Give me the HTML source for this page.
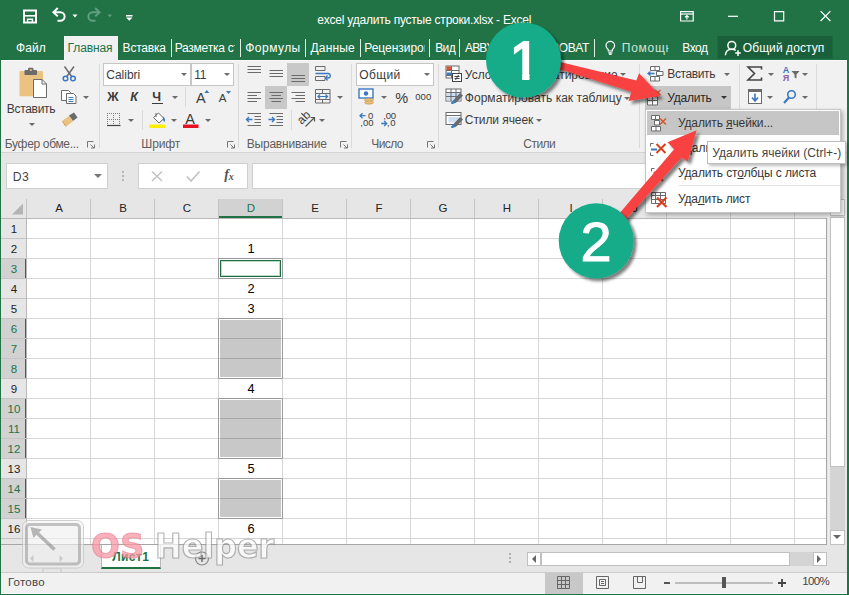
<!DOCTYPE html>
<html lang="ru">
<head>
<meta charset="utf-8">
<title>excel удалить пустые строки.xlsx - Excel</title>
<style>
html,body{margin:0;padding:0;}
body{width:849px;height:595px;overflow:hidden;position:relative;background:#217346;
  font-family:"Liberation Sans","DejaVu Sans",sans-serif;font-size:12px;color:#444;}
#win{position:absolute;left:0;top:0;width:849px;height:595px;overflow:hidden;}
.a{position:absolute;}
.t{position:absolute;white-space:nowrap;line-height:1;}
.txt{position:absolute;left:0;top:0;}
svg{position:absolute;left:0;top:0;overflow:visible;}
.dd{position:absolute;width:0;height:0;border-left:3px solid transparent;border-right:3px solid transparent;border-top:3px solid #6a6a6a;}
.gsep{position:absolute;top:64px;width:1px;height:84px;background:#dadada;}
.ssep{position:absolute;width:1px;height:20px;background:#dadada;}
.lnch{position:absolute;top:141px;width:7px;height:7px;}
.box{position:absolute;background:#fff;border:1px solid #c6c6c6;box-sizing:border-box;}
.sel{position:absolute;background:#c8c8c8;}
.rhs{position:absolute;left:1px;width:24px;background:#d2d2d2;border-right:2px solid #217346;}
.fill{position:absolute;left:220px;width:61px;background:#c8c8c8;}
u{text-decoration:underline;text-underline-offset:1px;}
</style>
</head>
<body>
<div id="win">
<!-- ===== TITLE BAR ===== -->
<svg width="849" height="60" viewBox="0 0 849 60">
  <!-- save -->
  <g fill="none" stroke="#fff">
    <path d="M24 10.500h12v12h-12z" stroke-width="2"/>
    <path d="M24 15.800h12" stroke-width="1.600"/>
    <path d="M27.600 22.500v-3.300h4.800v3.300" stroke-width="1.500"/>
  </g>
  <!-- undo -->
  <g fill="none" stroke="#fff" stroke-width="2">
    <path d="M54 12.200h6.300a4.300 4.300 0 0 1 0 8.600h-2.800"/>
    <path d="M57.800 8l-4.400 4.200 4.400 4.200" stroke-linejoin="miter"/>
  </g>
  <path d="M72.500 14.500h5l-2.500 3z" fill="#fff"/>
  <!-- redo (disabled) -->
  <g fill="none" stroke="#5f9f7e" stroke-width="2">
    <path d="M99 12.200h-6.300a4.300 4.300 0 0 0 0 8.600h2.800"/>
    <path d="M95.200 8l4.400 4.200-4.400 4.200"/>
  </g>
  <path d="M107.500 14.500h4.600l-2.300 2.800z" fill="#5f9f7e"/>
  <!-- customize QAT -->
  <path d="M126 15h6.5v1.4H126z M126 17.6h6.5l-3.25 3.2z" fill="#fff"/>
  <!-- ribbon display options -->
  <g fill="none" stroke="#fff" stroke-width="1.2">
    <path d="M680.6 11.6h12.6v9.4h-12.6z"/>
    <path d="M680.6 14h12.6"/>
    <path d="M686.9 19.6v-4 M684.9 17.4l2-1.9 2 1.9"/>
  </g>
  <!-- min / max / close -->
  <path d="M728 16.3h10" stroke="#fff" stroke-width="1.2"/>
  <path d="M774.5 11.6h9.2v9.2h-9.2z" fill="none" stroke="#fff" stroke-width="1.2"/>
  <path d="M820.6 11.2l9.8 9.8 M830.4 11.2l-9.8 9.8" stroke="#fff" stroke-width="1.2"/>
  <!-- active tab -->
  <rect x="64" y="36" width="54" height="25" fill="#f1f1f1"/><rect x="64" y="36" width="1" height="24" fill="#fafafa"/>
  <!-- share button -->
  <rect x="717.5" y="36" width="115" height="22.5" fill="#19603a"/>
  <g fill="none" stroke="#fff" stroke-width="1.5">
    <circle cx="731.8" cy="45.4" r="3.9"/>
    <path d="M725.4 55.2c.2-4 2.6-6 6.4-6 1.6 0 2.9.4 3.9 1.100"/>
    <path d="M735.2 53.1h5.6 M738 50.3v5.600"/>
  </g>
  <!-- lightbulb -->
  <g fill="none" stroke="#fff" stroke-width="1.200">
    <path d="M608.300 51v-1.300c-1.500-1.100-2.300-2.300-2.300-4.100a4.300 4.300 0 0 1 8.600 0c0 1.800-.8 3-2.300 4.100v1.300z"/>
    <path d="M608.300 52.800h4 M609 54.400h2.600"/>
  </g>
  <!-- tab separators -->
  <g stroke="#dfeee6" stroke-width="1">
    <path d="M171.5 39v18 M240.500 39v18 M305.500 39v18 M360.500 39v18 M429.500 39v18 M459.500 39v18 M594.500 39v18"/>
  </g>
</svg>
<!-- ===== RIBBON BG ===== -->
<div class="a" style="left:1px;top:60px;width:846px;height:93px;background:#f1f1f1;border-top:1px solid #fafafa;box-sizing:border-box;"></div>
<div class="a" style="left:65px;top:60px;width:53px;height:1px;background:#f1f1f1;"></div>
<div class="a" style="left:1px;top:153px;width:846px;height:46px;background:#e6e6e6;"></div>
<div class="a" style="left:1px;top:152px;width:846px;height:1px;background:#d2d4d4;"></div>
<!-- group separators -->
<div class="gsep" style="left:99px;"></div>
<div class="gsep" style="left:238px;"></div>
<div class="gsep" style="left:351px;"></div>
<div class="gsep" style="left:438px;"></div>
<div class="gsep" style="left:639px;"></div>
<div class="gsep" style="left:739px;"></div>
<div class="gsep" style="left:816px;"></div>
<!-- small separators -->
<div class="ssep" style="left:185px;top:87px;"></div>
<div class="ssep" style="left:142px;top:110px;"></div>
<div class="ssep" style="left:291px;top:110px;"></div>
<!-- input boxes -->
<div class="box" style="left:103px;top:63px;width:88px;height:23px;"></div>
<div class="box" style="left:191px;top:63px;width:43px;height:23px;"></div>
<div class="box" style="left:356px;top:63px;width:78px;height:23px;"></div>
<!-- pressed buttons -->
<div class="sel" style="left:287px;top:63px;width:22px;height:23px;"></div>
<div class="sel" style="left:265px;top:86px;width:22px;height:23px;"></div>
<div class="sel" style="left:645px;top:86px;width:86px;height:23px;background:#c6c6c6;"></div>
<!-- dropdown arrows -->
<div class="dd" style="left:29px;top:123px;"></div>
<div class="dd" style="left:83px;top:96px;"></div>
<div class="dd" style="left:181px;top:73px;"></div>
<div class="dd" style="left:224px;top:73px;"></div>
<div class="dd" style="left:172px;top:96px;"></div>
<div class="dd" style="left:128px;top:119px;"></div>
<div class="dd" style="left:171px;top:119px;"></div>
<div class="dd" style="left:205px;top:119px;"></div>
<div class="dd" style="left:337px;top:96px;"></div>
<div class="dd" style="left:319px;top:119px;"></div>
<div class="dd" style="left:381px;top:96px;"></div>
<div class="dd" style="left:424px;top:73px;"></div>
<div class="dd" style="left:620px;top:73px;"></div>
<div class="dd" style="left:624px;top:97px;"></div>
<div class="dd" style="left:536px;top:119px;"></div>
<div class="dd" style="left:724px;top:73px;"></div>
<div class="dd" style="left:721px;top:96px;border-top-color:#333;"></div>
<div class="dd" style="left:768px;top:73px;"></div>
<div class="dd" style="left:802px;top:73px;"></div>
<div class="dd" style="left:767px;top:96px;"></div>
<div class="dd" style="left:802px;top:96px;"></div>
<!-- ===== RIBBON ICONS ===== -->
<svg width="849" height="160" viewBox="0 0 849 160">
  <!-- dialog launchers -->
  <g fill="none" stroke="#777" stroke-width="1">
    <path d="M87.500 147.500v-6h6 M90.500 144.500l3.500 3.500 M94.500 144.500v3.500h-3.500"/>
    <path d="M227.500 147.500v-6h6 M230.500 144.500l3.500 3.500 M234.500 144.500v3.500h-3.500"/>
    <path d="M340.500 147.500v-6h6 M343.500 144.500l3.500 3.500 M347.500 144.500v3.500h-3.500"/>
    <path d="M427.500 147.500v-6h6 M430.500 144.500l3.500 3.500 M434.500 144.500v3.500h-3.500"/>
  </g>
  <!-- Paste -->
  <g>
    <rect x="19.500" y="71" width="23.500" height="25.300" rx="1" fill="#eac282"/>
    <rect x="24.500" y="70" width="12.500" height="5" rx=".8" fill="#6b6b6b"/>
    <rect x="28" y="67.700" width="5.500" height="3.500" rx="1.200" fill="#6b6b6b"/>
    <rect x="29.800" y="69.300" width="2" height="1.600" fill="#eac282"/>
    <path d="M33.500 79.500h8.500l4.500 4.500v13.500h-13z" fill="#fff" stroke="#6b6b6b" stroke-width="1"/>
    <path d="M42 79.500v4.500h4.500" fill="none" stroke="#6b6b6b" stroke-width="1"/>
  </g>
  <!-- Cut -->
  <g fill="none" stroke-width="1.500">
    <path d="M64.500 66.500l7.500 10.500 M74 66.500l-7.500 10.500" stroke="#6b6b6b"/>
    <circle cx="65.500" cy="78.500" r="2.300" stroke="#3a78c2"/>
    <circle cx="73" cy="78.500" r="2.300" stroke="#3a78c2"/>
  </g>
  <!-- Copy -->
  <g fill="#fff" stroke="#6b6b6b" stroke-width="1">
    <path d="M61.500 90.500h7l2 2v8h-9z"/>
    <path d="M66.500 93.500h7l2.500 2.500v7.500h-9.500z"/>
    <path d="M68.500 97.500h5 M68.500 99.500h5 M68.500 101.500h5" stroke="#3a78c2"/>
  </g>
  <!-- Format painter -->
  <g>
    <path d="M62 121l7-5 4 5.500-7 5z" fill="#eac282"/>
    <path d="M69 115.500l5-3 3.500 5-4.500 3.500z" fill="#6b6b6b"/>
    <path d="M62.500 121.500l3.500 5" stroke="#c79a4e" stroke-width="1"/>
  </g>
  <!-- grow / shrink font -->
  <path d="M204.300 93l2.500-3 2.500 3z" fill="#3a78c2"/>
  <path d="M226 91l2.500 3 2.500-3z" fill="#3a78c2"/>
  <!-- borders -->
  <g fill="none" stroke="#7a7a7a" stroke-width="1" stroke-dasharray="1 1">
    <path d="M107 113.500h13 M107 119.500h13 M107.500 113v12 M113.500 113v12 M119.500 113v12"/>
  </g>
  <path d="M107 125.500h13.500" stroke="#444" stroke-width="1.200"/>
  <!-- fill colour -->
  <g>
    <path d="M153.500 117.500l5-4.500 5.500 5.500-5 4.500z" fill="#fff" stroke="#6b6b6b" stroke-width="1"/>
    <path d="M156 113v4" stroke="#6b6b6b" stroke-width="1"/>
    <path d="M163 116.500c2 1.500 2.500 3.500 1.500 5.500-1.500-1-2-3-1.500-5.500z" fill="#3a78c2"/>
    <rect x="149.500" y="124.500" width="15.500" height="3.500" fill="#ffef00"/>
  </g>
  <!-- font colour -->
  <rect x="183" y="124.500" width="15.500" height="3.500" fill="#e81123"/>
  <!-- align top / middle / bottom -->
  <g stroke="#6b6b6b" stroke-width="1">
    <path d="M247.500 66.500h13.500 M247.500 69.500h13.500 M247.500 72.500h13.500"/>
    <path d="M269.500 70.500h13.500 M269.500 73.500h13.500 M269.500 76.500h13.500"/>
    <path d="M291.500 75.500h13.500 M291.500 78.500h13.500 M291.500 81.500h13.500"/>
    <!-- left / center / right -->
    <path d="M247.500 92.500h13.500 M247.500 95.500h9.500 M247.500 98.500h13.500 M247.500 101.500h9.500"/>
    <path d="M269.500 92.500h13.500 M271.500 95.500h9.500 M269.500 98.500h13.500 M271.500 101.500h9.500"/>
    <path d="M291.500 92.500h13.500 M295.500 95.500h9.500 M291.500 98.500h13.500 M295.500 101.500h9.500"/>
    <!-- indent -->
    <path d="M247.500 113.500h13.500 M254.500 116.500h6.500 M254.500 119.500h6.500 M254.500 122.500h6.500 M247.500 125.500h13.500"/>
    <path d="M269.500 113.500h13.500 M276.500 116.500h6.500 M276.500 119.500h6.500 M276.500 122.500h6.500 M269.500 125.500h13.500"/>
  </g>
  <g fill="none" stroke="#3a78c2" stroke-width="1.400">
    <path d="M252.500 119.500h-6 M249 117l-2.500 2.500 2.500 2.500"/>
    <path d="M268.500 119.500h6 M272 117l2.500 2.500-2.500 2.500"/>
  </g>
  <!-- wrap text -->
  <g fill="none" stroke-width="1">
    <path d="M315.500 66.500h9.500v4h-9.500z M315.500 76.500h9.500v4h-9.500z" stroke="#6b6b6b"/>
    <path d="M315.500 73.500h12.500a2 2 0 0 1 0 4.500h-2" stroke="#3a78c2" stroke-width="1.300"/>
    <path d="M327.500 75.500l-2 2.500 2 2.500" stroke="#3a78c2" stroke-width="1.300"/>
  </g>
  <!-- merge -->
  <g fill="none" stroke="#6b6b6b" stroke-width="1">
    <path d="M315.500 89.500h14.500v13.500h-14.500z M315.500 93.500h14.500 M315.500 99.500h14.500 M322.500 89.500v4 M322.500 99.500v3.500"/>
    <path d="M318 96.500h9.500 M320 94.500l-2 2 2 2 M325.500 94.500l2 2-2 2" stroke="#3a78c2" stroke-width="1.200"/>
  </g>
  <!-- orientation arrow -->
  <path d="M305.500 126.500l8.500-8.500 M310.500 117.500h4v4" fill="none" stroke="#555" stroke-width="1.200"/>
  <!-- currency -->
  <g>
    <rect x="359" y="89" width="14" height="9" fill="#fff" stroke="#3a78c2" stroke-width="1.400"/>
    <circle cx="366" cy="93.500" r="2.200" fill="#3a78c2"/>
    <ellipse cx="369" cy="100" rx="4.500" ry="1.600" fill="#eac282" stroke="#c79a4e" stroke-width=".8"/>
    <ellipse cx="369" cy="102.500" rx="4.500" ry="1.600" fill="#eac282" stroke="#c79a4e" stroke-width=".8"/>
  </g>
  <!-- inc/dec decimal arrows -->
  <g fill="none" stroke="#3a78c2" stroke-width="1.300">
    <path d="M365.500 115.700h-5.500 M362.500 113.200l-2.500 2.500 2.500 2.500"/>
    <path d="M381.200 123.500h5.500 M384.200 121l2.500 2.500-2.500 2.500"/>
  </g>
  <!-- conditional formatting -->
  <g>
    <rect x="446" y="66" width="13" height="12" fill="#fff" stroke="#6b6b6b" stroke-width="1"/>
    <rect x="446.500" y="66.500" width="5" height="4" fill="#d65532"/>
    <rect x="446.500" y="72.500" width="5" height="3" fill="#3a78c2"/>
    <path d="M451.500 66v12 M446 70.500h13 M446 75.500h7" stroke="#6b6b6b" stroke-width="1" fill="none"/>
    <rect x="452.500" y="73.500" width="9" height="8" fill="#fff" stroke="#444" stroke-width="1"/>
    <path d="M454.500 76.500h5 M454.500 78.500h5 M458.500 75l-3 5" stroke="#444" stroke-width="1" fill="none"/>
  </g>
  <!-- format as table -->
  <g>
    <rect x="446" y="89" width="15" height="12" fill="#fff" stroke="#6b6b6b" stroke-width="1"/>
    <rect x="446.500" y="92.500" width="14" height="8" fill="#cfdff3"/>
    <path d="M446 92.500h15 M446 96.500h15 M451 89v12 M456 89v12" stroke="#6b6b6b" stroke-width="1" fill="none"/>
    <path d="M460 93l3 2.500-6 6.500-3.500.5.500-3z" fill="#6b6b6b"/>
    <path d="M454 100l2.500 2.500-4 1.500c-1 0-1.500-.5-1.500-1.500z" fill="#3a78c2"/>
  </g>
  <!-- cell styles -->
  <g>
    <rect x="446" y="112.500" width="15" height="12" fill="#fff" stroke="#6b6b6b" stroke-width="1"/>
    <rect x="448.500" y="117" width="10" height="5.500" fill="#cfdff3"/>
    <path d="M446 115.500h15" stroke="#6b6b6b" stroke-width="1"/>
    <path d="M460 117l3 2.500-6 6.500-3.500.5.500-3z" fill="#6b6b6b"/>
    <path d="M454 124l2.500 2.500-4 1.500c-1 0-1.500-.5-1.500-1.500z" fill="#3a78c2"/>
  </g>
  <!-- insert cells -->
  <g fill="#fff" stroke="#6b6b6b" stroke-width="1" transform="translate(0 -1)">
    <path d="M650.500 67.500h9v4h-9z M650.500 77.500h9v4.500h-9z M655 67.500v4 M655 77.500v4.500"/>
    <path d="M656.500 72.500h6.500v4h-6.500z"/>
    <path d="M654.500 74.500h-6 M650.500 72.500l-2.500 2 2.500 2" stroke="#3a78c2" stroke-width="1.300" fill="none"/>
  </g>
  <!-- delete cells -->
  <g fill="#fff" stroke="#6b6b6b" stroke-width="1" transform="translate(0 -2)">
    <path d="M647.500 98.500h10v8.500h-10z M652.500 98.500v8.500 M647.500 102.500h10"/>
    <path d="M655 92l5.500 5 M660.500 92l-5.500 5" stroke="#d65532" stroke-width="1.400" fill="none"/>
  </g>
  <!-- autosum -->
  <path d="M761.500 69.500v-2.500h-13.500l6.500 6.500-6.500 6.500h13.500v-2.500" fill="none" stroke="#444" stroke-width="1.600"/>
  <!-- fill down -->
  <g>
    <rect x="748.500" y="89.500" width="13" height="14" fill="#fff" stroke="#6b6b6b" stroke-width="1"/>
    <path d="M748.500 91h13" stroke="#6b6b6b" stroke-width="2"/>
    <path d="M755 93.500v7 M752 97.500l3 3.500 3-3.500" stroke="#3a78c2" stroke-width="1.600" fill="none"/>
  </g>
  <!-- sort & filter funnel -->
  <path d="M791.500 71h8l-3 3.500v4l-2-1v-3z" fill="#6b6b6b"/>
  <!-- find -->
  <g fill="none" stroke="#3a78c2">
    <circle cx="791.500" cy="94.500" r="3.800" stroke-width="1.600"/>
    <path d="M789 97.500l-5 5.500" stroke-width="2.200"/>
  </g>
</svg>
<!-- ===== FORMULA BAR ===== -->
<div class="box" style="left:6px;top:163px;width:102px;height:26px;border-color:#d0d0d0;"></div>
<div class="box" style="left:138px;top:163px;width:110px;height:26px;border-color:#d0d0d0;"></div>
<div class="box" style="left:252px;top:163px;width:580px;height:26px;border-color:#d0d0d0;"></div>
<div class="dd" style="left:94px;top:174px;border-left-width:4px;border-right-width:4px;border-top-width:4px;border-top-color:#777;"></div>
<svg width="849" height="200" viewBox="0 0 849 200">
  <g fill="#b8b8b8"><rect x="122" y="171" width="2" height="2"/><rect x="122" y="175" width="2" height="2"/><rect x="122" y="179" width="2" height="2"/></g>
  <path d="M152 171.500l10 9.500 M162 171.500l-10 9.500" stroke="#c4c4c4" stroke-width="1.600" fill="none"/>
  <path d="M187 176.500l4 4.500 8.500-9.500" stroke="#c4c4c4" stroke-width="1.800" fill="none"/>
</svg>
<!-- ===== GRID ===== -->
<div class="a" style="left:1px;top:199px;width:846px;height:373px;background:#e6e6e6;"></div>
<div class="a" style="left:26px;top:218px;width:801px;height:326px;background:#fff;"></div>
<!-- selected headers -->
<div class="a" style="left:218px;top:199px;width:65px;height:17px;background:#d2d2d2;border-bottom:2px solid #217346;"></div>
<div class="rhs" style="top:259px;height:19px;"></div>
<div class="rhs" style="top:319px;height:59px;"></div>
<div class="rhs" style="top:399px;height:59px;"></div>
<div class="rhs" style="top:479px;height:39px;"></div>
<svg width="849" height="595" viewBox="0 0 849 595">
  <!-- corner triangle -->
  <path d="M23 203.500v11h-11z" fill="#b4b4b4"/>
  <!-- header separators -->
  <g stroke="#c4c4c4" stroke-width="1">
    <path d="M26.500 199v19 M90.500 199v19 M154.500 199v19 M218.500 199v19 M282.500 199v19 M346.500 199v19 M410.500 199v19 M474.500 199v19 M538.500 199v19 M602.500 199v19 M666.500 199v19 M730.500 199v19 M794.500 199v19"/>
    <path d="M1 238.500h25 M1 258.500h25 M1 278.500h25 M1 298.500h25 M1 318.500h25 M1 338.500h25 M1 358.500h25 M1 378.500h25 M1 398.500h25 M1 418.500h25 M1 438.500h25 M1 458.500h25 M1 478.500h25 M1 498.500h25 M1 518.500h25 M1 538.500h25"/>
  </g>
  <!-- gridlines -->
  <g stroke="#d6d6d6" stroke-width="1">
    <path d="M90.500 218v326 M154.500 218v326 M218.500 218v326 M282.500 218v326 M346.500 218v326 M410.500 218v326 M474.500 218v326 M538.500 218v326 M602.500 218v326 M666.500 218v326 M730.500 218v326 M794.500 218v326"/>
    <path d="M26 238.500h801 M26 258.500h801 M26 278.500h801 M26 298.500h801 M26 318.500h801 M26 338.500h801 M26 358.500h801 M26 378.500h801 M26 398.500h801 M26 418.500h801 M26 438.500h801 M26 458.500h801 M26 478.500h801 M26 498.500h801 M26 518.500h801 M26 538.500h801"/>
  </g>
  <!-- grid frame -->
  <path d="M26.500 218v326 M1 218.500h826" stroke="#b8b8b8" stroke-width="1" fill="none"/>
  <path d="M826.500 218v326.500 M1 544.500h826" stroke="#a6a6a6" stroke-width="1" fill="none"/>
</svg>
<!-- selected cells -->
<div class="fill" style="top:320px;height:57px;"></div>
<div class="fill" style="top:400px;height:57px;"></div>
<div class="fill" style="top:480px;height:37px;"></div>
<svg width="849" height="595" viewBox="0 0 849 595">
  <path d="M220 338.500h61 M220 358.500h61 M220 418.500h61 M220 438.500h61 M220 498.500h61" stroke="#aaa6a8" stroke-width="1"/>
  <path d="M218.500 258.500h64v20h-64z M218.500 318.500h64v60h-64z M218.500 398.500h64v60h-64z M218.500 478.500h64v40h-64z" fill="none" stroke="#9a9a9a" stroke-width="1"/>
</svg>
<div class="a" style="left:220px;top:260px;width:59px;height:15px;border:1px solid #1e6e42;background:#fff;box-shadow:inset 0 0 0 1px rgba(33,115,70,.28);"></div>
<!-- ===== SCROLLBARS ===== -->
<div class="a" style="left:828px;top:199px;width:3px;height:346px;background:#ececec;"></div>
<div class="a" style="left:830px;top:199px;width:15px;height:346px;background:#d4d4d4;"></div>
<div class="a" style="left:830px;top:199px;width:13px;height:15px;background:#fff;border:1px solid #c0c0c0;"></div>
<div class="a" style="left:830px;top:217px;width:13px;height:248px;background:#fff;border:1px solid #c0c0c0;"></div>
<div class="a" style="left:830px;top:530px;width:13px;height:13px;background:#fff;border:1px solid #c0c0c0;"></div>
<div class="dd" style="left:833px;top:535px;border-left-width:4px;border-right-width:4px;border-top-width:4px;border-top-color:#666;"></div>
<div class="a" style="left:527px;top:552px;width:300px;height:14px;background:#d4d4d4;"></div>
<div class="a" style="left:527px;top:552px;width:12px;height:12px;background:#fff;border:1px solid #c0c0c0;"></div>
<div class="a" style="left:541px;top:552px;width:247px;height:12px;background:#fff;border:1px solid #c0c0c0;"></div>
<div class="a" style="left:813px;top:552px;width:12px;height:12px;background:#fff;border:1px solid #c0c0c0;"></div>
<svg width="849" height="595" viewBox="0 0 849 595">
  <path d="M536 555l-4 4 4 4z M817 555l4 4-4 4z" fill="#666"/>
  <g fill="#b0b0b0"><rect x="509" y="553" width="2" height="2"/><rect x="509" y="557" width="2" height="2"/><rect x="509" y="561" width="2" height="2"/></g>
</svg>
<!-- ===== SHEET TAB ===== -->
<div class="a" style="left:101px;top:545px;width:60px;height:22px;background:#fff;border-bottom:2px solid #217346;border-left:1px solid #b8b8b8;border-right:1px solid #b8b8b8;box-sizing:border-box;height:24px;"></div>
<svg width="849" height="595" viewBox="0 0 849 595">
  <circle cx="202" cy="558.500" r="6.500" fill="none" stroke="#8a8a8a" stroke-width="1.200"/>
  <path d="M198.500 558.500h7 M202 555v7" stroke="#666" stroke-width="1.400"/>
  <!-- sheet nav arrows (dim) -->
  <path d="M33 555l-3.500 3.500 3.500 3.500z M60 555l3.500 3.500-3.500 3.500z" fill="#c4c4c4"/>
</svg>
<!-- ===== STATUS BAR ===== -->
<div class="a" style="left:1px;top:572px;width:846px;height:1px;background:#cbcbcb;"></div>
<div class="a" style="left:1px;top:573px;width:845px;height:20px;background:#f1f1f1;border-left:1px solid #fbfbfb;border-bottom:1px solid #fbfbfb;"></div>
<div class="a" style="left:545px;top:573px;width:38px;height:21px;background:#c8c8c8;"></div>
<svg width="849" height="595" viewBox="0 0 849 595">
  <!-- normal view -->
  <g fill="none" stroke="#666" stroke-width="1">
    <path d="M557.500 576.500h12v12h-12z M561.500 576.500v12 M565.500 576.500v12 M557.500 580.500h12 M557.500 584.500h12"/>
    <!-- page layout -->
    <path d="M596.500 576.500h12v12h-12z M599.500 579.500h6v6h-6z M601 581.500h3 M601 583.500h3"/>
    <!-- page break -->
    <path d="M633.500 576.500h12v12h-12z M637.500 576.500v6h5v-6"/>
  </g>
  <!-- zoom slider -->
  <path d="M675 583h98" stroke="#8a8a8a" stroke-width="1"/>
  <rect x="722" y="577" width="4" height="11" fill="#555"/>
  <path d="M664 583h6" stroke="#444" stroke-width="1.800"/>
  <path d="M778 583h8 M782 579v8" stroke="#444" stroke-width="1.800"/>
</svg>

<div class="txt">
<span class="t" style="left:317.30px;top:14.04px;font-size:12px;color:#fff;letter-spacing:-0.220px;">excel удалить пустые строки.xlsx - Excel</span>
<span class="t" style="left:16.00px;top:41.94px;font-size:12px;color:#fff;letter-spacing:0.046px;">Файл</span>
<span class="t" style="left:67.60px;top:41.94px;font-size:12px;color:#217346;letter-spacing:-0.127px;">Главная</span>
<span class="t" style="left:122.60px;top:41.94px;font-size:12px;color:#fff;letter-spacing:-0.216px;">Вставка</span>
<span class="t" style="left:174.70px;top:41.94px;font-size:12px;color:#fff;letter-spacing:-0.244px;clip-path:inset(-3px 4.00px -3px -3px);">Разметка ст</span>
<span class="t" style="left:245.30px;top:41.94px;font-size:12px;color:#fff;letter-spacing:0.454px;">Формулы</span>
<span class="t" style="left:310.60px;top:41.94px;font-size:12px;color:#fff;letter-spacing:0.123px;">Данные</span>
<span class="t" style="left:364.30px;top:41.94px;font-size:12px;color:#fff;letter-spacing:-0.042px;clip-path:inset(-3px 5.30px -3px -3px);">Рецензиров</span>
<span class="t" style="left:435.20px;top:41.94px;font-size:12px;color:#fff;letter-spacing:-0.573px;">Вид</span>
<span class="t" style="left:464.90px;top:41.94px;font-size:12px;color:#fff;letter-spacing:-0.768px;">ABBYY Fine</span>
<span class="t" style="left:534.80px;top:41.94px;font-size:12px;color:#fff;letter-spacing:-0.432px;">ACROBAT</span>
<span class="t" style="left:621.80px;top:41.94px;font-size:12px;color:#cfe4d8;letter-spacing:0.744px;clip-path:inset(-3px 4.60px -3px -3px);">Помощн</span>
<span class="t" style="left:682.30px;top:41.94px;font-size:12px;color:#fff;letter-spacing:-0.489px;">Вход</span>
<span class="t" style="left:742.80px;top:42.44px;font-size:12px;color:#fff;letter-spacing:0.081px;">Общий доступ</span>
<span class="t" style="left:6.80px;top:102.84px;font-size:12px;color:#3b3b3b;letter-spacing:-0.309px;">Вставить</span>
<span class="t" style="left:4.80px;top:137.84px;font-size:12px;color:#5e5e5e;letter-spacing:-0.335px;">Буфер обме...</span>
<span class="t" style="left:106.30px;top:68.64px;font-size:12px;color:#3b3b3b;letter-spacing:-0.017px;">Calibri</span>
<span class="t" style="left:194.30px;top:68.64px;font-size:12px;color:#3b3b3b;letter-spacing:-0.284px;">11</span>
<span class="t" style="left:107.30px;top:90.72px;font-size:12.5px;color:#3b3b3b;font-weight:bold;letter-spacing:2.088px;">Ж</span>
<span class="t" style="left:130.30px;top:90.72px;font-size:12.5px;color:#3b3b3b;font-weight:bold;font-style:italic;letter-spacing:2.213px;">К</span>
<span class="t" style="left:152.30px;top:90.72px;font-size:12.5px;color:#3b3b3b;font-weight:bold;letter-spacing:2.103px;border-bottom:1.5px solid #3b3b3b;padding-bottom:0px;">Ч</span>
<span class="t" style="left:196.10px;top:90.53px;font-size:14.5px;color:#3b3b3b;letter-spacing:1.228px;">A</span>
<span class="t" style="left:218.80px;top:92.77px;font-size:11.5px;color:#3b3b3b;letter-spacing:1.728px;">A</span>
<span class="t" style="left:185.30px;top:111.93px;font-size:14.5px;color:#3b3b3b;letter-spacing:3.228px;">A</span>
<span class="t" style="left:141.30px;top:137.84px;font-size:12px;color:#5e5e5e;letter-spacing:-0.117px;">Шрифт</span>
<span class="t" style="left:246.80px;top:137.84px;font-size:12px;color:#5e5e5e;letter-spacing:-0.226px;">Выравнивание</span>
<span class="t" style="left:301.60px;top:115.44px;font-size:12px;color:#3b3b3b;transform:rotate(-45deg);transform-origin:0 85%;">ab</span>
<span class="t" style="left:359.30px;top:68.64px;font-size:12px;color:#3b3b3b;letter-spacing:0.380px;">Общий</span>
<span class="t" style="left:395.30px;top:90.73px;font-size:14.5px;color:#3b3b3b;letter-spacing:0.494px;">%</span>
<span class="t" style="left:415.30px;top:91.96px;font-size:9.5px;color:#3b3b3b;letter-spacing:0.014px;">000</span>
<span class="t" style="left:367.90px;top:110.96px;font-size:9.5px;color:#3b3b3b;letter-spacing:0.503px;">0</span>
<span class="t" style="left:360.30px;top:118.26px;font-size:9.5px;color:#3b3b3b;letter-spacing:0.060px;">,00</span>
<span class="t" style="left:383.30px;top:110.96px;font-size:9.5px;color:#3b3b3b;letter-spacing:-0.173px;">,00</span>
<span class="t" style="left:387.10px;top:118.26px;font-size:9.5px;color:#3b3b3b;letter-spacing:0.481px;">,0</span>
<span class="t" style="left:371.30px;top:137.84px;font-size:12px;color:#5e5e5e;letter-spacing:-0.623px;">Число</span>
<span class="t" style="left:464.80px;top:68.84px;font-size:12px;color:#3b3b3b;letter-spacing:0.010px;">Условное форматирование</span>
<span class="t" style="left:464.80px;top:91.64px;font-size:12px;color:#3b3b3b;letter-spacing:0.030px;">Форматировать как таблицу</span>
<span class="t" style="left:464.80px;top:114.44px;font-size:12px;color:#3b3b3b;letter-spacing:-0.079px;">Стили ячеек</span>
<span class="t" style="left:523.30px;top:137.84px;font-size:12px;color:#5e5e5e;letter-spacing:-0.536px;">Стили</span>
<span class="t" style="left:667.30px;top:68.44px;font-size:12px;color:#3b3b3b;letter-spacing:-0.384px;">Вставить</span>
<span class="t" style="left:667.30px;top:91.84px;font-size:12px;color:#262626;letter-spacing:-0.233px;">Удалить</span>
<span class="t" style="left:782.80px;top:65.88px;font-size:9px;color:#3a78c2;font-weight:bold;letter-spacing:0.900px;">А</span>
<span class="t" style="left:782.80px;top:74.38px;font-size:9px;color:#8e5aa8;font-weight:bold;letter-spacing:0.931px;">Я</span>
<span class="t" style="left:12.80px;top:170.67px;font-size:12.2px;color:#444;letter-spacing:0.353px;">D3</span>
<span class="t" style="left:224.30px;top:168.18px;font-size:14px;color:#555;font-weight:bold;font-style:italic;font-family:'Liberation Serif','DejaVu Serif',serif;letter-spacing:1.228px;">f</span>
<span class="t" style="left:228.80px;top:172.00px;font-size:10px;color:#555;font-weight:bold;font-style:italic;font-family:'Liberation Serif','DejaVu Serif',serif;letter-spacing:2.400px;">x</span>
<span class="t" style="left:27.00px;top:202.67px;font-size:11.5px;color:#222;width:64px;text-align:center;">A</span>
<span class="t" style="left:91.00px;top:202.67px;font-size:11.5px;color:#222;width:64px;text-align:center;">B</span>
<span class="t" style="left:155.00px;top:202.67px;font-size:11.5px;color:#222;width:64px;text-align:center;">C</span>
<span class="t" style="left:219.00px;top:202.67px;font-size:11.5px;color:#217346;width:64px;text-align:center;">D</span>
<span class="t" style="left:283.00px;top:202.67px;font-size:11.5px;color:#222;width:64px;text-align:center;">E</span>
<span class="t" style="left:347.00px;top:202.67px;font-size:11.5px;color:#222;width:64px;text-align:center;">F</span>
<span class="t" style="left:411.00px;top:202.67px;font-size:11.5px;color:#222;width:64px;text-align:center;">G</span>
<span class="t" style="left:475.00px;top:202.67px;font-size:11.5px;color:#222;width:64px;text-align:center;">H</span>
<span class="t" style="left:539.00px;top:202.67px;font-size:11.5px;color:#222;width:64px;text-align:center;">I</span>
<span class="t" style="left:603.00px;top:202.67px;font-size:11.5px;color:#222;width:64px;text-align:center;">J</span>
<span class="t" style="left:667.00px;top:202.67px;font-size:11.5px;color:#222;width:64px;text-align:center;">K</span>
<span class="t" style="left:731.00px;top:202.67px;font-size:11.5px;color:#222;width:64px;text-align:center;">L</span>
<span class="t" style="left:1.00px;top:223.57px;font-size:11.5px;color:#222;width:26px;text-align:center;">1</span>
<span class="t" style="left:1.00px;top:243.57px;font-size:11.5px;color:#222;width:26px;text-align:center;">2</span>
<span class="t" style="left:1.00px;top:263.57px;font-size:11.5px;color:#217346;width:26px;text-align:center;">3</span>
<span class="t" style="left:1.00px;top:283.57px;font-size:11.5px;color:#222;width:26px;text-align:center;">4</span>
<span class="t" style="left:1.00px;top:303.57px;font-size:11.5px;color:#222;width:26px;text-align:center;">5</span>
<span class="t" style="left:1.00px;top:323.57px;font-size:11.5px;color:#217346;width:26px;text-align:center;">6</span>
<span class="t" style="left:1.00px;top:343.57px;font-size:11.5px;color:#217346;width:26px;text-align:center;">7</span>
<span class="t" style="left:1.00px;top:363.57px;font-size:11.5px;color:#217346;width:26px;text-align:center;">8</span>
<span class="t" style="left:1.00px;top:383.57px;font-size:11.5px;color:#222;width:26px;text-align:center;">9</span>
<span class="t" style="left:1.00px;top:403.57px;font-size:11.5px;color:#217346;width:26px;text-align:center;">10</span>
<span class="t" style="left:1.00px;top:423.57px;font-size:11.5px;color:#217346;width:26px;text-align:center;">11</span>
<span class="t" style="left:1.00px;top:443.57px;font-size:11.5px;color:#217346;width:26px;text-align:center;">12</span>
<span class="t" style="left:1.00px;top:463.57px;font-size:11.5px;color:#222;width:26px;text-align:center;">13</span>
<span class="t" style="left:1.00px;top:483.57px;font-size:11.5px;color:#217346;width:26px;text-align:center;">14</span>
<span class="t" style="left:1.00px;top:503.57px;font-size:11.5px;color:#217346;width:26px;text-align:center;">15</span>
<span class="t" style="left:1.00px;top:523.57px;font-size:11.5px;color:#222;width:26px;text-align:center;">16</span>
<span class="t" style="left:219.00px;top:243.26px;font-size:12.8px;color:#000;width:64px;text-align:center;">1</span>
<span class="t" style="left:219.00px;top:283.26px;font-size:12.8px;color:#000;width:64px;text-align:center;">2</span>
<span class="t" style="left:219.00px;top:303.26px;font-size:12.8px;color:#000;width:64px;text-align:center;">3</span>
<span class="t" style="left:219.00px;top:383.26px;font-size:12.8px;color:#000;width:64px;text-align:center;">4</span>
<span class="t" style="left:219.00px;top:463.26px;font-size:12.8px;color:#000;width:64px;text-align:center;">5</span>
<span class="t" style="left:219.00px;top:523.26px;font-size:12.8px;color:#000;width:64px;text-align:center;">6</span>
<span class="t" style="left:112.30px;top:550.84px;font-size:12px;color:#217346;font-weight:bold;letter-spacing:0.374px;">Лист1</span>
<span class="t" style="left:7.90px;top:576.87px;font-size:11.5px;color:#444;letter-spacing:0.247px;">Готово</span>
<span class="t" style="left:802.30px;top:576.17px;font-size:11.5px;color:#444;letter-spacing:-0.630px;">100%</span>
</div>
<!-- ===== DROPDOWN MENU ===== -->
<div class="a" style="left:645px;top:109px;width:196px;height:104px;background:#fff;border:1px solid #c6c6c6;box-sizing:border-box;box-shadow:2px 2px 4px rgba(0,0,0,.28);"></div>
<div class="a" style="left:647px;top:111px;width:192px;height:24px;background:#c6c6c6;"></div>
<div class="a" style="left:679px;top:185px;width:161px;height:1px;background:#e1e1e1;"></div>
<svg width="849" height="595" viewBox="0 0 849 595">
  <!-- delete cells icon -->
  <g fill="#fff" stroke="#6b6b6b" stroke-width="1">
    <path d="M651.500 115.500h8v4h-8z M651.500 126.500h9v4.500h-9z M656 126.500v4.500 M655.500 115.500v4"/>
    <path d="M654.500 120.500h5v4.500h-5z"/>
  </g>
  <path d="M660 118.500l6 6 M666 118.500l-6 6" stroke="#d65532" stroke-width="1.500" fill="none"/>
  <!-- delete rows icon -->
  <g fill="none" stroke="#6b6b6b" stroke-width="1">
    <path d="M653.500 143.500h-3v3 M650.500 152.500v3h3"/>
    <path d="M651 149.500h6" stroke="#3a78c2" stroke-width="2"/>
  </g>
  <path d="M656.500 144l9 9 M665.500 144l-9 9" stroke="#d6401f" stroke-width="2" fill="none"/>
  <!-- delete columns icon -->
  <g fill="none" stroke="#6b6b6b" stroke-width="1">
    <path d="M651.500 171.500v-3h3 M660.500 168.500h3v3"/>
  </g>
  <path d="M654 172l9 9 M663 172l-9 9" stroke="#d6401f" stroke-width="2" fill="none"/>
  <!-- delete sheet icon -->
  <g fill="#fff" stroke="#6b6b6b" stroke-width="1">
    <path d="M651.500 192.500h14v11h-14z M651.500 195.500h14 M651.500 199.500h14 M655.500 192.500v11 M660.500 192.500v11"/>
  </g>
  <path d="M657 197.500l9.500 9.500 M666.500 197.500l-9.500 9.500" stroke="#d6401f" stroke-width="2.200" fill="none"/>
</svg>

<div class="txt">
<span class="t" style="left:677.90px;top:117.34px;font-size:12px;color:#363636;letter-spacing:-0.121px;">Удалить <u>я</u>чейки...</span>
<span class="t" style="left:677.90px;top:142.04px;font-size:12px;color:#363636;letter-spacing:0.088px;">Удалить строки с листа</span>
<span class="t" style="left:677.90px;top:167.14px;font-size:12px;color:#363636;letter-spacing:-0.105px;">Удалить ст<u>о</u>лбцы с листа</span>
<span class="t" style="left:677.90px;top:193.14px;font-size:12px;color:#363636;letter-spacing:-0.166px;">Уда<u>л</u>ить лист</span>
</div>
<!-- tooltip -->
<div class="a" style="left:707px;top:141px;width:139px;height:23px;background:#fff;border:1px solid #bdbdbd;box-sizing:border-box;box-shadow:2px 2px 3px rgba(0,0,0,.25);"></div>

<div class="txt">
<span class="t" style="left:712.30px;top:146.84px;font-size:12px;color:#444;letter-spacing:0.029px;">Удалить ячейки (Ctrl+-)</span>
</div>
<!-- ===== ANNOTATIONS ===== -->
<svg width="849" height="595" viewBox="0 0 849 595">
  <defs>
    <filter id="sh" x="-20%" y="-20%" width="150%" height="150%">
      <feGaussianBlur in="SourceAlpha" stdDeviation="1.600"/>
      <feOffset dx="3" dy="3"/>
      <feComponentTransfer><feFuncA type="linear" slope=".5"/></feComponentTransfer>
      <feMerge><feMergeNode/><feMergeNode in="SourceGraphic"/></feMerge>
    </filter>
  </defs>
  <!-- arrow 2 (under circle 2) -->
  <path filter="url(#sh)" fill="#f84242" d="M612.100 221.900L674.100 149.300L667.500 142.300L696.700 130.200L687.700 161.400L681.600 157.400L618.500 227.500z"/>
  <!-- arrow 1 -->
  <path filter="url(#sh)" fill="#f84242" d="M556 61L636.300 80.400L639.100 73.300L660.300 96L628.500 100.900L631.300 91.700L556 68z"/>
  <circle filter="url(#sh)" cx="523.500" cy="60" r="37.500" fill="#12ab89"/>
  <circle filter="url(#sh)" cx="596.200" cy="240.800" r="37.500" fill="#12ab89"/>
</svg>
<!-- ===== WATERMARK ===== -->
<svg width="849" height="595" viewBox="0 0 849 595">
  <g opacity=".8">
    <rect x="22.500" y="520.500" width="61" height="47.500" rx="6" fill="rgba(242,242,242,.7)" stroke="#c6c6c6" stroke-width="1"/>
    <rect x="26.500" y="524.500" width="53" height="39.500" rx="3.500" fill="rgba(236,236,236,.35)" stroke="#b2b2b2" stroke-width="3"/>
    <path d="M43 573v-4.500h18v4.500" fill="none" stroke="#cdcdcd" stroke-width="1.500"/>
    <path d="M54.500 549.500L36 532" stroke="#a4a4a4" stroke-width="3.500" fill="none"/>
    <path d="M30.400 527l11.500 2.500-8.500 8.500z" fill="#a4a4a4"/>
    <path d="M33.500 555l-3 3.500 3 3.500z M59.500 555l3 3.500-3 3.500z" fill="#c9c9c9"/>
  </g>
</svg>

<div class="txt">
<span class="t" style="left:509.80px;top:32.99px;font-size:54px;color:#fff;-webkit-text-stroke:2px #fff;clip-path:polygon(-5px -5px,40px -5px,40px 40.2px,19.6px 40.2px,19.6px 60px,12.4px 60px,12.4px 40.2px,-5px 40.2px);">1</span>
<span class="t" style="left:580.50px;top:214.20px;font-size:56px;color:#fff;-webkit-text-stroke:1px #fff;">2</span>
<span class="t" style="left:90.50px;top:529.96px;font-size:33px;color:rgba(248,150,165,.74);font-weight:bold;font-family:'DejaVu Sans','Liberation Sans',sans-serif;transform:scaleX(1.0323);transform-origin:0 50%;-webkit-text-stroke:1px rgba(225,120,135,.55);">OS</span>
<span class="t" style="left:154.80px;top:529.96px;font-size:33px;color:rgba(255,255,255,.7);font-weight:bold;font-family:'DejaVu Sans','Liberation Sans',sans-serif;transform:scaleX(0.9645);transform-origin:0 50%;-webkit-text-stroke:1.2px rgba(120,120,120,.55);">Helper</span>
</div>
</div>
</body>
</html>
